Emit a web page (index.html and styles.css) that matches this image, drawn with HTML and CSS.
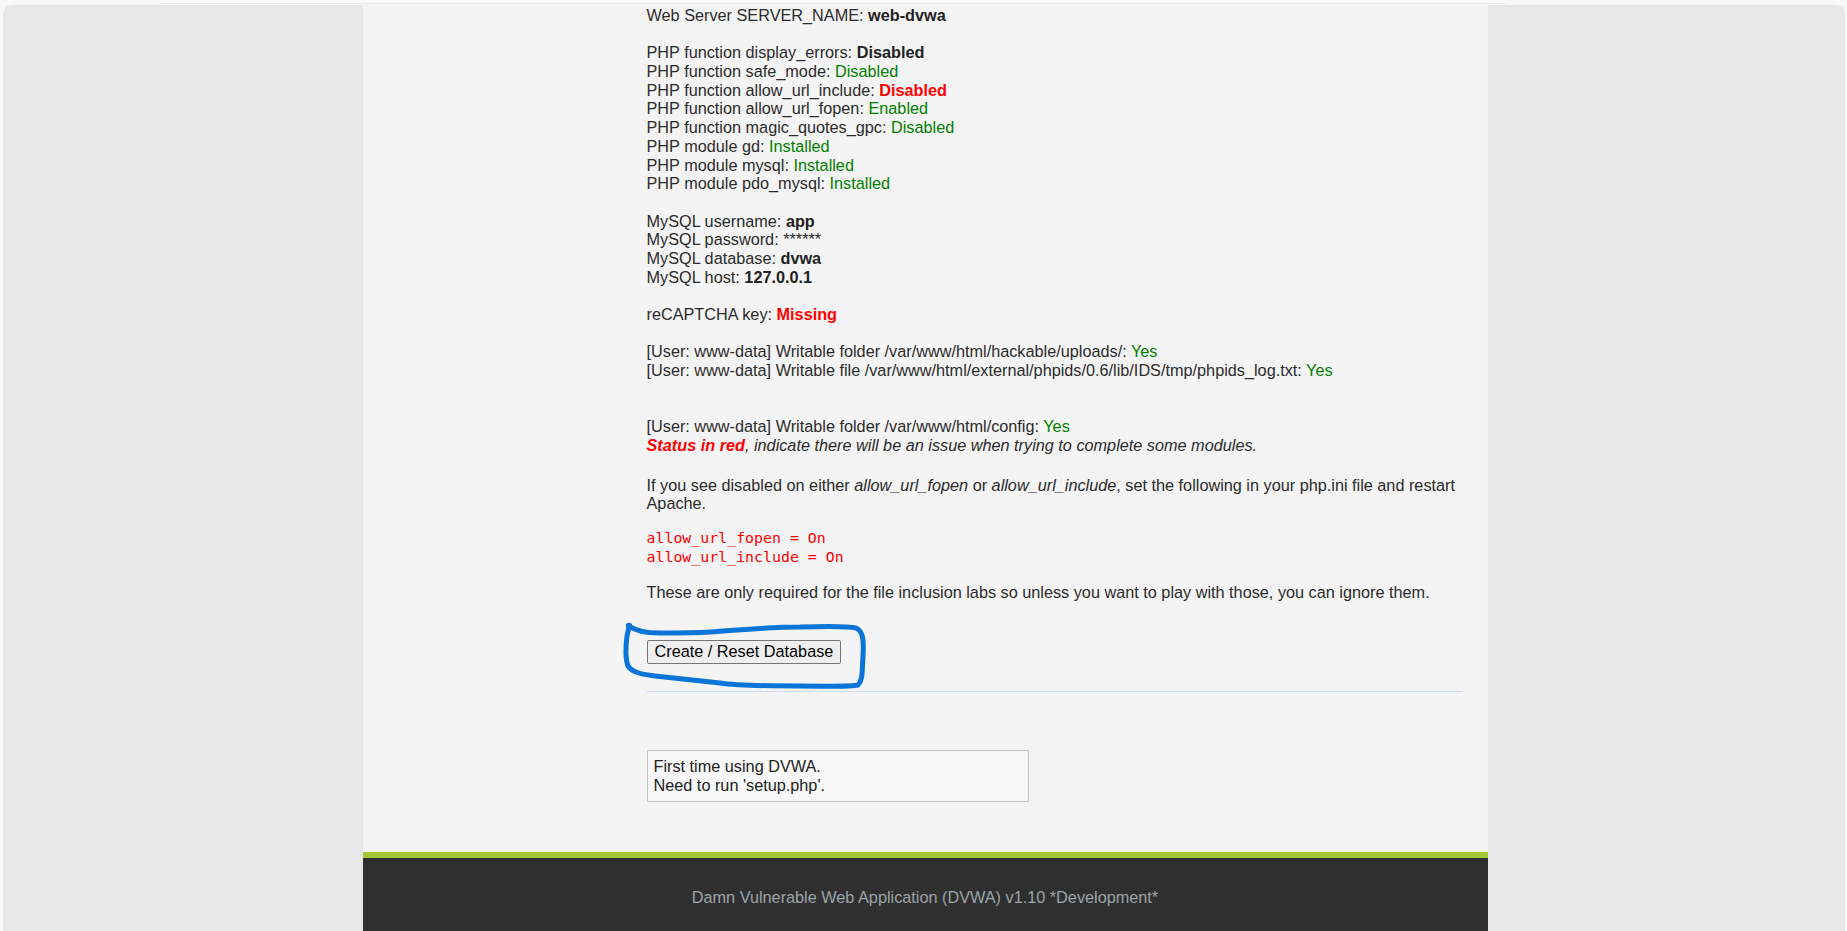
FILE: index.html
```html
<!DOCTYPE html>
<html lang="en">
<head>
<meta charset="utf-8">
<title>Setup :: Damn Vulnerable Web Application (DVWA) v1.10 *Development*</title>
<link rel="stylesheet" href="styles.css">
</head>
<body>
<div class="topline"></div>
<div class="panel">
  <div class="container">
    <div class="body-row">
      <div class="menu"></div>
      <div class="main">
        <div class="status">
          Web Server SERVER_NAME: <b>web-dvwa</b><br><br>
          PHP function display_errors: <b>Disabled</b><br>
          PHP function safe_mode: <span class="ok">Disabled</span><br>
          PHP function allow_url_include: <span class="bad">Disabled</span><br>
          PHP function allow_url_fopen: <span class="ok">Enabled</span><br>
          PHP function magic_quotes_gpc: <span class="ok">Disabled</span><br>
          PHP module gd: <span class="ok">Installed</span><br>
          PHP module mysql: <span class="ok">Installed</span><br>
          PHP module pdo_mysql: <span class="ok">Installed</span><br><br>
          MySQL username: <b>app</b><br>
          MySQL password: ******<br>
          MySQL database: <b>dvwa</b><br>
          MySQL host: <b>127.0.0.1</b><br><br>
          reCAPTCHA key: <span class="bad">Missing</span><br><br>
          [User: www-data] Writable folder /var/www/html/hackable/uploads/: <span class="ok">Yes</span><br>
          [User: www-data] Writable file /var/www/html/external/phpids/0.6/lib/IDS/tmp/phpids_log.txt: <span class="ok">Yes</span><br><br><br>
          [User: www-data] Writable folder /var/www/html/config: <span class="ok">Yes</span><br>
          <i><span class="bad">Status in red</span>, indicate there will be an issue when trying to complete some modules.</i>
        </div>
        <p class="tip">If you see disabled on either <i>allow_url_fopen</i> or <i>allow_url_include</i>, set the following in your php.ini file and restart Apache.</p>
        <pre class="code">allow_url_fopen = On
allow_url_include = On</pre>
        <p class="note">These are only required for the file inclusion labs so unless you want to play with those, you can ignore them.</p>
        <div class="btn-wrap">
          <button class="btn" type="button">Create / Reset Database</button>
          <svg class="scribble" width="260" height="80" viewBox="0 0 260 80" aria-hidden="true">
            <path d="M9,10 C16,15 24,17 40,17 C60,17 75,17 90,16 C120,14 145,11 180,11 C210,10 228,10 236,12 C243,15 244,24 243,40 C242,55 243,64 238,69 C230,71 210,70 180,70 C150,70 120,70 100,67 C80,65 55,62 35,60 C20,58 12,56 8,50 C5,42 6,28 7,20 C8,15 9,12 9,10" fill="none" stroke="#0b74d8" stroke-width="5" stroke-linecap="round" stroke-linejoin="round"/>
            <circle cx="9" cy="10" r="3.2" fill="#0b74d8"/>
          </svg>
        </div>
        <hr class="rule">
        <div class="message">First time using DVWA.<br>Need to run 'setup.php'.</div>
      </div>
    </div>
    <div class="footer">Damn Vulnerable Web Application (DVWA) v1.10 *Development*</div>
  </div>
</div>
</body>
</html>
```

FILE: styles.css
```css
html, body {
  margin: 0;
  padding: 0;
}

body {
  background: #f7f7f7;
  font-family: "Liberation Sans", Arial, sans-serif;
  font-size: 16.25px;
  color: #2b2b2b;
  overflow: hidden;
}

.topline {
  height: 3px;
  margin: 0 340px 0 160px;
  border-bottom: 1px solid #ececec;
  background: #fafafa;
}

.panel {
  margin: 1px 2px 0 3px;
  background: #e7e7e7;
  border-radius: 9px 9px 0 0;
  min-height: 940px;
  display: flex;
  justify-content: center;
}

.container {
  width: 1125px;
  margin-left: 2px;
  background: #f4f4f4;
  display: flex;
  flex-direction: column;
}

.body-row {
  display: flex;
}

.menu {
  width: 284px;
  flex: none;
}

.main {
  width: 816px;
  padding: 1px 0 50px 0;
  line-height: 18.68px;
}

.status b {
  color: #222;
}

.ok {
  color: #008000;
}

.bad {
  color: #ff0000;
  font-weight: bold;
}

.tip {
  margin: 21px 0 0 0;
}

.code {
  margin: 16px 0 0 0;
  font-family: "DejaVu Sans Mono", "Liberation Mono", monospace;
  font-size: 14.9px;
  line-height: 18.68px;
  color: #ff0000;
}

.note {
  margin: 17px 0 0 0;
}

.btn-wrap {
  position: relative;
  margin-top: 38px;
  height: 24px;
}

.btn {
  display: block;
  height: 24px;
  margin: 0;
  padding: 0 7px;
  font-family: "Liberation Sans", Arial, sans-serif;
  font-size: 16.25px;
  color: #000;
  background: #efefef;
  border: 1px solid #767676;
  border-radius: 2px;
}

.scribble {
  position: absolute;
  left: -27px;
  top: -24px;
  pointer-events: none;
}

.rule {
  margin: 27px 0 0 0;
  border: 0;
  height: 1px;
  background: #c8dbf3;
}

.message {
  margin-top: 58px;
  width: 368px;
  padding: 6.5px 6px;
  border: 1px solid #c2c2c2;
  background: #f7f8f7;
  color: #222;
}

.footer {
  border-top: 6px solid #a3cb38;
  background: #2f2f2f;
  color: #9da3a8;
  text-align: center;
  padding: 30px 0 60px 0;
  line-height: 18.68px;
}
```
